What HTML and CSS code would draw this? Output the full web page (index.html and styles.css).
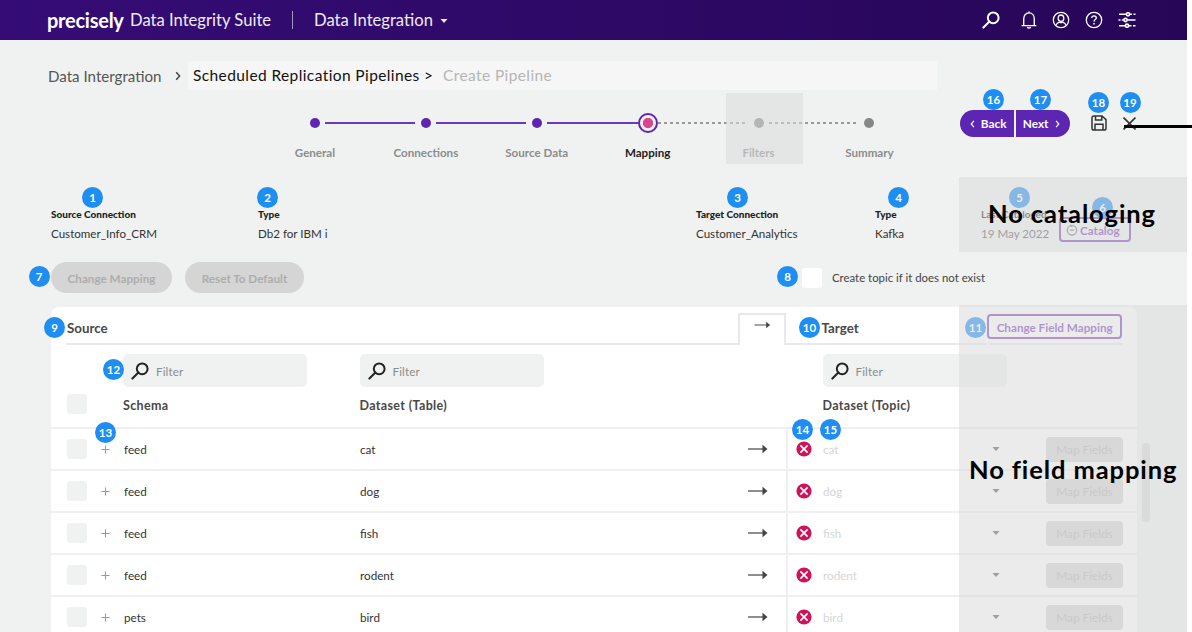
FILE: index.html
```html
<!DOCTYPE html>
<html lang="en">
<head>
  <meta charset="UTF-8" />
  <meta name="viewport" content="width=device-width, initial-scale=1.0"/>
  <title>Data Integrity Suite - Create Pipeline</title>
  <link rel="stylesheet" href="styles.css">
</head>
<body>

  <!-- shared icons -->
  <svg class="sprite">
    <symbol id="search" viewBox="0 0 18 18">
      <circle cx="11.2" cy="6.8" r="5.4" fill="none" stroke="currentColor" stroke-width="2"/>
      <path d="M7.4 10.6L1.4 16.6" stroke="currentColor" stroke-width="2.1" stroke-linecap="round"/>
    </symbol>
    <symbol id="arrow" viewBox="0 0 20 10">
      <path d="M0 5H15" stroke="currentColor" stroke-width="1.2"/>
      <path d="M14.5 .8L19.5 5L14.5 9.2Z" fill="currentColor"/>
    </symbol>
    <symbol id="plus" viewBox="0 0 10 10">
      <path d="M5 .5V9.5M.5 5H9.5" stroke="currentColor" stroke-width="1.2"/>
    </symbol>
    <symbol id="error" viewBox="0 0 16 16">
      <circle cx="8" cy="8" r="7.6" fill="#cf1259"/>
      <path d="M4.4 4.4L11.6 11.6M11.6 4.4L4.4 11.6" stroke="#fff" stroke-width="1.7"/>
    </symbol>
    <symbol id="caret" viewBox="0 0 8 4">
      <path d="M.5 0H7.5L4 4Z" fill="currentColor"/>
    </symbol>
    <symbol id="chevron" viewBox="0 0 6 10">
      <path d="M1.2 1.2L4.6 5L1.2 8.8" fill="none" stroke="currentColor" stroke-width="1.5"/>
    </symbol>
  </svg>

  <div class="page">
    <header class="topbar">
      <span class="logo">precisely</span>
      <span class="suite">Data Integrity Suite</span>
      <span class="divider"></span>
      <span class="product">Data Integration</span>
      <svg class="product-caret"><use href="#caret"/></svg>
      <nav class="tools">
        <svg width="18" height="18"><use href="#search"/></svg>
        <svg width="16" height="18" viewBox="0 0 16 18" fill="none" stroke="currentColor" stroke-width="1.4">
          <path d="M.6 14.6H15.4M2.7 14.4V8C2.7 4.6 4.7 1.9 8 1.9S13.3 4.6 13.3 8V14.4M8 .4V2"/>
          <path d="M6.2 16.2Q8 18 9.8 16.2"/>
        </svg>
        <svg width="18" height="18" viewBox="0 0 18 18" fill="none" stroke="currentColor" stroke-width="1.3">
          <circle cx="9" cy="9" r="7.7"/>
          <ellipse cx="9" cy="7.2" rx="2.8" ry="3.2"/>
          <path d="M3.9 14.4C4.6 12.3 6 11.5 7.6 11.2L9 11.8L10.4 11.2C12 11.5 13.4 12.3 14.1 14.4"/>
        </svg>
        <svg width="18" height="18" viewBox="0 0 18 18" fill="none" stroke="currentColor" stroke-width="1.3">
          <circle cx="9" cy="9" r="7.7"/>
          <path d="M6.7 7C6.7 4.1 11.3 4.2 11.3 7C11.3 8.6 9 8.6 9 10.8"/>
          <path d="M9 12V13.4" stroke-width="1.5"/>
        </svg>
        <svg width="18" height="16" viewBox="0 0 18 16" fill="none" stroke="currentColor" stroke-width="1.6">
          <path d="M1 2.3H8M12 2.3H14M15.5 2.3H17.5M.5 8H2.5M3.8 8H5.5M9.5 8H17.5M1 13.7H7M11 13.7H13.5M15 13.7H17.5"/>
          <circle cx="10" cy="2.3" r="1.6"/>
          <circle cx="7.5" cy="8" r="1.6"/>
          <circle cx="9" cy="13.7" r="1.6"/>
        </svg>
      </nav>
    </header>

    <div class="breadcrumb">
      <span class="crumb-root">Data Intergration</span>
      <svg class="crumb-chevron"><use href="#chevron"/></svg>
      <div class="crumb-box">
        <span class="crumb-parent">Scheduled Replication Pipelines &gt;</span>
        <span class="crumb-current">Create Pipeline</span>
      </div>
    </div>

    <div class="wizard">
      <ol class="steps">
        <li class="step done"><i class="dot"></i><span>General</span></li>
        <li class="step done"><i class="dot"></i><span>Connections</span></li>
        <li class="step done last-done"><i class="dot"></i><span>Source Data</span></li>
        <li class="step current"><i class="dot"></i><span>Mapping</span></li>
        <li class="step"><i class="dot"></i><span>Filters</span></li>
        <li class="step end"><i class="dot"></i><span>Summary</span></li>
      </ol>
      <div class="actions">
        <button class="nav-btn back"><svg><use href="#chevron"/></svg>Back</button>
        <button class="nav-btn next">Next<svg><use href="#chevron"/></svg></button>
        <svg class="save" viewBox="0 0 16 16" fill="none" stroke="currentColor" stroke-width="1.5">
          <path d="M2.8 1H11L15 4.6V13.2Q15 15 13.2 15H2.8Q1 15 1 13.2V2.8Q1 1 2.8 1Z"/>
          <path d="M4.5 1V5H10.8V1M4 15V9.2H12V15"/>
        </svg>
        <svg class="close" viewBox="0 0 12 12" stroke="currentColor" stroke-width="1.5">
          <path d="M.5 .5L11.5 11.5M11.5 .5L.5 11.5"/>
        </svg>
      </div>
    </div>

    <div class="summary">
      <div class="field"><b>Source Connection</b><span>Customer_Info_CRM</span></div>
      <div class="field"><b>Type</b><span>Db2 for IBM i</span></div>
      <div class="field"><b>Target Connection</b><span>Customer_Analytics</span></div>
      <div class="field"><b>Type</b><span>Kafka</span></div>
      <div class="field catalog-date"><b>Last Cataloged</b><span>19 May 2022</span></div>
      <button class="outline-btn catalog-btn">
        <svg viewBox="0 0 12 12" fill="none" stroke="#777" stroke-width="1.3">
          <circle cx="6" cy="6.3" r="4.7"/><path d="M3.8 6.2H8.2M4 1L6 2.4"/>
        </svg>Catalog
      </button>
    </div>

    <div class="toolbar">
      <button class="pill">Change Mapping</button>
      <button class="pill reset">Reset To Default</button>
      <label class="topic"><i class="box"></i>Create topic if it does not exist</label>
    </div>

    <div class="panel">
      <div class="panel-head">
        <h2 class="source-title">Source</h2>
        <div class="tab"><svg><use href="#arrow"/></svg></div>
        <h2 class="target-title">Target</h2>
        <button class="outline-btn field-btn">Change Field Mapping</button>
      </div>

      <div class="columns">
        <i class="check"></i>
        <div class="column schema">
          <div class="filter"><svg><use href="#search"/></svg>Filter</div>
          <h3>Schema</h3>
        </div>
        <div class="column table">
          <div class="filter"><svg><use href="#search"/></svg>Filter</div>
          <h3>Dataset (Table)</h3>
        </div>
        <div class="column topic-col">
          <div class="filter"><svg><use href="#search"/></svg>Filter</div>
          <h3>Dataset (Topic)</h3>
        </div>
      </div>

      <div class="row">
        <div class="source"><i class="check"></i><svg class="plus"><use href="#plus"/></svg><span>feed</span><span>cat</span><svg class="arrow"><use href="#arrow"/></svg></div>
        <div class="target"><svg class="error"><use href="#error"/></svg><span>cat</span><svg class="caret"><use href="#caret"/></svg><button>Map Fields</button></div>
      </div>
      <div class="row">
        <div class="source"><i class="check"></i><svg class="plus"><use href="#plus"/></svg><span>feed</span><span>dog</span><svg class="arrow"><use href="#arrow"/></svg></div>
        <div class="target"><svg class="error"><use href="#error"/></svg><span>dog</span><svg class="caret"><use href="#caret"/></svg><button>Map Fields</button></div>
      </div>
      <div class="row">
        <div class="source"><i class="check"></i><svg class="plus"><use href="#plus"/></svg><span>feed</span><span>fish</span><svg class="arrow"><use href="#arrow"/></svg></div>
        <div class="target"><svg class="error"><use href="#error"/></svg><span>fish</span><svg class="caret"><use href="#caret"/></svg><button>Map Fields</button></div>
      </div>
      <div class="row">
        <div class="source"><i class="check"></i><svg class="plus"><use href="#plus"/></svg><span>feed</span><span>rodent</span><svg class="arrow"><use href="#arrow"/></svg></div>
        <div class="target"><svg class="error"><use href="#error"/></svg><span>rodent</span><svg class="caret"><use href="#caret"/></svg><button>Map Fields</button></div>
      </div>
      <div class="row">
        <div class="source"><i class="check"></i><svg class="plus"><use href="#plus"/></svg><span>pets</span><span>bird</span><svg class="arrow"><use href="#arrow"/></svg></div>
        <div class="target"><svg class="error"><use href="#error"/></svg><span>bird</span><svg class="caret"><use href="#caret"/></svg><button>Map Fields</button></div>
      </div>
    </div>

    <i class="scrollbar"></i>

    <!-- numbered callouts -->
    <span class="badge n1">1</span>
    <span class="badge n2">2</span>
    <span class="badge n3">3</span>
    <span class="badge n4">4</span>
    <span class="badge n5">5</span>
    <span class="badge n6">6</span>
    <span class="badge n7">7</span>
    <span class="badge n8">8</span>
    <span class="badge n9">9</span>
    <span class="badge n10">10</span>
    <span class="badge n11">11</span>
    <span class="badge n12">12</span>
    <span class="badge n13">13</span>
    <span class="badge n14">14</span>
    <span class="badge n15">15</span>
    <span class="badge n16">16</span>
    <span class="badge n17">17</span>
    <span class="badge n18">18</span>
    <span class="badge n19">19</span>

    <!-- areas that are out of scope -->
    <div class="mask mask-filters"></div>
    <div class="mask mask-catalog"></div>
    <div class="mask mask-fields"></div>
    <div class="note note-catalog">No cataloging</div>
    <div class="note note-fields">No field mapping</div>
  </div>
  <i class="strike"></i>

</body>
</html>
```
FILE: styles.css
```css
* {
  box-sizing: border-box;
}

body {
  margin: 0;
  width: 1192px;
  height: 632px;
  overflow: hidden;
  position: relative;
  background: #fff;
  color: #333;
  font-family: Lato, sans-serif;
  font-size: 12px;
}

button {
  font-family: inherit;
  border: none;
  padding: 0;
}

svg {
  display: block;
  flex: none;
}

.sprite {
  position: absolute;
  width: 0;
  height: 0;
}

.page {
  position: relative;
  width: 1187px;
  height: 632px;
  overflow: hidden;
  background: #f0f2f1;
}

/* top bar */
.topbar {
  height: 40px;
  display: flex;
  align-items: center;
  padding-left: 47px;
  color: #eeebf5;
  background: linear-gradient(to right, #350c76, #270657);
  white-space: nowrap;
}

.logo {
  width: 83px;
  color: #fff;
  font-size: 20px;
  font-weight: 700;
  letter-spacing: -0.25px;
}

.suite {
  width: 162px;
  font-size: 16.6px;
}

.divider {
  width: 1px;
  height: 18px;
  margin-top: -1px;
  background: #a294c0;
}

.product {
  width: 126px;
  margin-left: 21px;
  font-size: 16.6px;
}

.product-caret {
  width: 8px;
  height: 4px;
  margin-top: 2px;
}

.tools {
  display: flex;
  align-items: center;
  margin-left: auto;
  padding-right: 51px;
  gap: 15px;
  color: #fff;
}

.tools svg:first-child {
  margin-right: 6px;
}

/* breadcrumb */
.breadcrumb {
  display: flex;
  align-items: center;
  height: 50px;
  padding: 21px 0 0 48px;
  white-space: nowrap;
}

.crumb-root {
  width: 127px;
  color: #555;
  font-size: 15.1px;
}

.crumb-chevron {
  width: 6px;
  height: 10px;
  color: #444;
}

.crumb-box {
  display: flex;
  align-items: center;
  width: 749px;
  height: 29px;
  margin-left: 7px;
  padding: 0 0 2px 5px;
  background: #f6f6f6;
  color: #111;
  font-size: 15.5px;
  letter-spacing: 0.4px;
}

.crumb-parent {
  width: 250px;
}

.crumb-current {
  color: #b5b5b5;
}

/* wizard */
.wizard {
  display: flex;
  height: 94px;
  padding-left: 259.5px;
}

.steps {
  display: flex;
  margin: 0;
  padding: 22px 0 0;
  list-style: none;
}

.step {
  position: relative;
  display: flex;
  flex-direction: column;
  align-items: center;
  width: 110.9px;
  color: #8b8d8c;
  font-size: 11.6px;
  font-weight: 700;
}

.step .dot {
  width: 10px;
  height: 10px;
  margin: 6px 0 18px;
  border-radius: 50%;
  background: #868887;
}

.step.done .dot {
  background: #5c26b3;
}

/* connector to the next step */
.step:not(.end)::after {
  content: "";
  position: absolute;
  top: 10px;
  left: 65.5px;
  width: 90px;
  height: 1.5px;
  background: repeating-linear-gradient(to right, #999 0 3px, transparent 3px 6px);
}

.step.done::after {
  top: 10px;
  height: 2px;
  background: #6b3abb;
}

.step.last-done::after {
  width: 91px;
}

.step.current {
  color: #222;
}

.step.current .dot {
  width: 20px;
  height: 20px;
  margin: 1px 0 13px;
  border: 2px solid #5c26b3;
  background: radial-gradient(circle, #d8478a 0 4.8px, #f4eff8 5.4px);
}

.actions {
  display: flex;
  align-items: flex-start;
  padding: 20px 0 0 35px;
}

.nav-btn {
  display: flex;
  align-items: center;
  height: 27px;
  background: #5c26b3;
  color: #fff;
  font-size: 11.8px;
  font-weight: 700;
}

.nav-btn svg {
  width: 5px;
  height: 8px;
}

.back {
  width: 54px;
  margin-right: 2px;
  padding-left: 10px;
  gap: 6px;
  border-radius: 14px 0 0 14px;
}

.back svg {
  transform: scaleX(-1);
}

.next {
  width: 54px;
  padding-left: 7px;
  gap: 6px;
  border-radius: 0 14px 14px 0;
}

.save {
  width: 16px;
  height: 16px;
  margin: 5px 0 0 21px;
}

.close {
  width: 13px;
  height: 13px;
  margin: 7px 0 0 16px;
}

.strike {
  position: absolute;
  top: 125px;
  left: 1124px;
  width: 68px;
  height: 3px;
  background: #000;
}

/* connection summary */
.summary {
  display: grid;
  grid-template-columns: 207px 438px 179px 106px 78px auto;
  height: 78px;
  padding: 24px 0 0 51px;
}

.field {
  display: flex;
  flex-direction: column;
  white-space: nowrap;
  line-height: 12px;
}

.field b {
  color: #222;
  font-size: 10px;
  font-weight: 900;
}

.field span {
  margin-top: 8px;
  font-size: 11.6px;
}

.catalog-date b {
  font-weight: 700;
}

.catalog-date span {
  color: #555;
}

.outline-btn {
  border: 2px solid #7b3fc0;
  border-radius: 4px;
  background: transparent;
  color: #7b3fc0;
  font-size: 11.7px;
  font-weight: 700;
}

.catalog-btn {
  display: flex;
  align-items: center;
  width: 72px;
  height: 25px;
  margin-top: 9px;
  padding-left: 5px;
  gap: 2px;
}

.catalog-btn svg {
  width: 12px;
  height: 12px;
}

/* toolbar */
.toolbar {
  display: flex;
  align-items: center;
  height: 31px;
  padding-left: 51px;
}

.pill {
  width: 121px;
  height: 31px;
  border-radius: 16px;
  background: #d5d5d5;
  color: #adadad;
  font-size: 11.7px;
  font-weight: 700;
}

.reset {
  width: 119px;
  margin-left: 13px;
}

.topic {
  display: flex;
  align-items: center;
  margin-left: 498px;
  gap: 10px;
  color: #444;
  font-size: 11.4px;
}

.box {
  width: 20px;
  height: 20px;
  border-radius: 3px;
  background: #fff;
}

/* mapping table */
.panel {
  width: 1086px;
  height: 330px;
  margin: 14px 0 0 51px;
  border-radius: 8px 8px 0 0;
  background: #fff;
}

.panel-head {
  position: relative;
  display: flex;
  height: 38px;
  margin: 0 15px;
}

.panel-head h2 {
  margin: 0;
  padding-top: 13px;
  border-bottom: 2px solid #e9e9e9;
  color: #484848;
  font-size: 13.3px;
  line-height: 16px;
}

.panel-head .source-title {
  width: 673px;
  padding-left: 1px;
}

.tab {
  width: 48px;
  height: 32px;
  margin-top: 6px;
  padding: 6px 0 0 14px;
  border: 2px solid #e9e9e9;
  border-bottom: none;
  color: #444;
}

.tab svg {
  width: 17px;
  height: 8px;
}

.panel-head .target-title {
  width: 202px;
  padding-left: 36px;
}

.field-btn {
  width: 135px;
  height: 25px;
  margin-top: 7px;
}

/* rest of the line, below the button */
.panel-head::after {
  content: "";
  position: absolute;
  right: 0;
  bottom: 0;
  width: 133px;
  height: 2px;
  background: #e9e9e9;
}

.columns {
  display: flex;
  height: 84px;
  padding: 9px 0 0 16px;
  border-bottom: 2px solid #f0f0f0;
}

.check {
  flex: none;
  width: 20px;
  height: 20px;
  border-radius: 3px;
  background: #f0f2f1;
}

.columns .check {
  margin-top: 40px;
}

.column {
  width: 184px;
}

.column.schema {
  margin-left: 36px;
}

.column.table {
  margin-left: 52.5px;
}

.column.topic-col {
  margin-left: 279px;
}

.filter {
  display: flex;
  align-items: center;
  height: 33px;
  padding-left: 8px;
  gap: 7px;
  border-radius: 5px;
  background: #f0f2f1;
  color: #8c8c8c;
  font-size: 11.7px;
  letter-spacing: 0.1px;
}

.filter svg {
  width: 18px;
  height: 18px;
  color: #222;
}

.column h3 {
  margin: 11px 0 0;
  color: #484848;
  font-size: 12.5px;
  letter-spacing: 0.35px;
  line-height: 16px;
}

.row {
  display: flex;
  height: 42px;
  border-bottom: 2px solid #f0f0f0;
}

.source {
  display: grid;
  grid-template-columns: 34px 23px 236px 388px 20px;
  align-items: center;
  width: 737px;
  padding-left: 16px;
  border-right: 2px solid #f0f0f0;
  font-size: 11.7px;
}

.plus {
  width: 9px;
  height: 9px;
  color: #999;
}

.arrow {
  width: 20px;
  height: 10px;
  margin-top: -1px;
  color: #444;
}

.target {
  display: grid;
  grid-template-columns: 27px 169px 54px 77px;
  align-items: center;
  padding-left: 8px;
  color: #d5d5d5;
  font-size: 11.7px;
}

.error {
  width: 16px;
  height: 16px;
}

.caret {
  width: 8px;
  height: 4px;
  color: #555;
}

.target button {
  height: 25px;
  border-radius: 4px;
  background: #d5d5d5;
  color: #b4b4b4;
  font-size: 11.8px;
}

.scrollbar {
  position: absolute;
  top: 443px;
  left: 1142px;
  width: 8px;
  height: 79px;
  border-radius: 4px;
  background: #dadada;
}

/* callouts */
.badge {
  position: absolute;
  width: 21px;
  height: 21px;
  border-radius: 50%;
  background: #1e8ef2;
  color: #fff;
  font-size: 11.5px;
  font-weight: 700;
  line-height: 21px;
  text-align: center;
}

.n1 { left: 82px; top: 187px; }
.n2 { left: 257px; top: 187px; }
.n3 { left: 727px; top: 187px; }
.n4 { left: 888px; top: 187px; }
.n5 { left: 1009px; top: 187px; }
.n6 { left: 1092px; top: 197px; }
.n7 { left: 28.5px; top: 266px; }
.n8 { left: 777px; top: 266px; }
.n9 { left: 44px; top: 317px; }
.n10 { left: 799px; top: 317px; }
.n11 { left: 965px; top: 317px; }
.n12 { left: 103px; top: 359px; }
.n13 { left: 95px; top: 422px; }
.n14 { left: 792px; top: 419px; }
.n15 { left: 820px; top: 419px; }
.n16 { left: 983px; top: 89px; }
.n17 { left: 1030px; top: 89px; }
.n18 { left: 1088px; top: 92px; }
.n19 { left: 1119.5px; top: 92px; }

/* out of scope */
.mask {
  position: absolute;
  background: rgba(219, 219, 219, 0.55);
}

.mask-filters {
  left: 726px;
  top: 93px;
  width: 77px;
  height: 71px;
}

.mask-catalog {
  left: 959px;
  top: 177px;
  width: 228px;
  height: 75px;
}

.mask-fields {
  left: 959px;
  top: 305px;
  width: 228px;
  height: 327px;
}

.note {
  position: absolute;
  color: #000;
  font-size: 25.5px;
  font-weight: 700;
  letter-spacing: 0.9px;
  line-height: 30px;
  white-space: nowrap;
}

.note-catalog {
  left: 988px;
  top: 198px;
}

.note-fields {
  left: 969px;
  top: 454px;
}
```
